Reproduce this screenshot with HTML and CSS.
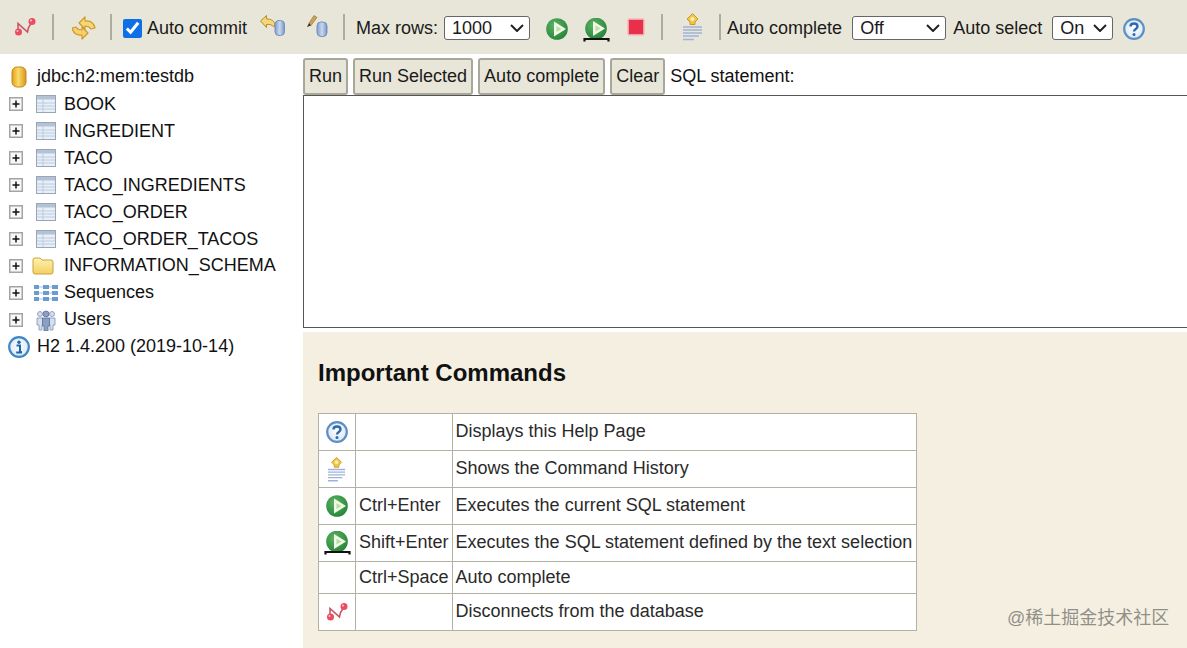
FILE: index.html
```html
<!DOCTYPE html>
<html lang="en">
<head>
<meta charset="utf-8">
<title>H2 Console</title>
<link rel="stylesheet" href="styles.css">
</head>
<body>
<svg class="defs" aria-hidden="true">
  <defs>
    <radialGradient id="gGreen" cx="40%" cy="35%" r="75%"><stop offset="0" stop-color="#5fb565"/><stop offset="1" stop-color="#1f7f35"/></radialGradient>
    <radialGradient id="gHelp" cx="50%" cy="45%" r="60%"><stop offset="0" stop-color="#ffffff"/><stop offset="1" stop-color="#d6e4f4"/></radialGradient>
    <linearGradient id="gGold" x1="0" x2="1" y1="0" y2="0"><stop offset="0" stop-color="#e0a01c"/><stop offset=".45" stop-color="#fbdb6a"/><stop offset="1" stop-color="#d8961a"/></linearGradient>
    <linearGradient id="gBlueCyl" x1="0" x2="1" y1="0" y2="0"><stop offset="0" stop-color="#7f9dcf"/><stop offset=".5" stop-color="#c9d8ef"/><stop offset="1" stop-color="#7793c6"/></linearGradient>
    <linearGradient id="gFolder" x1="0" x2="0" y1="0" y2="1"><stop offset="0" stop-color="#fff3b0"/><stop offset="1" stop-color="#f2cf62"/></linearGradient>
    <symbol id="iDisc" viewBox="0 0 22 20">
      <path d="M4 14V6.500l9.500 8.500 1-4.500 3.500-5.500" fill="none" stroke="#c9505f" stroke-width="1.500"/>
      <circle cx="4.500" cy="15" r="3.500" fill="#ea4d62"/><circle cx="18" cy="4.500" r="3.500" fill="#ea4d62"/>
      <circle cx="17" cy="3.500" r="1" fill="#ffc4cc"/><circle cx="3.500" cy="14" r="1" fill="#ffc4cc"/>
    </symbol>
    <symbol id="iRefresh" viewBox="0 0 24 24">
      <path d="M7 7l6-6v4q8-1 10 7l-4 1q-2-3-6-3v3z" fill="#f6d873" stroke="#cf9a2c" stroke-width="1.200" stroke-linejoin="round"/>
      <path d="M7 7l6-6v4q8-1 10 7l-4 1q-2-3-6-3v3z" transform="rotate(180 11.500 12)" fill="#f6d06a" stroke="#cf9a2c" stroke-width="1.200" stroke-linejoin="round"/>
    </symbol>
    <symbol id="iRollback" viewBox="0 0 26 22">
      <path d="M0.500 6l6-5.500v3.500c4 0 7 1 8.500 5l-1 3c-2-2-4-3-7.500-2.500v3z" fill="#f6d778" stroke="#b48a2c" stroke-width="1"/>
      <rect x="15" y="5.500" width="9.500" height="15" rx="4" fill="url(#gBlueCyl)" stroke="#7490bf"/>
    </symbol>
    <symbol id="iCommit" viewBox="0 0 22 22">
      <path d="M3 8L8 .5l3 2-6 8z" fill="#c9a25a" stroke="#a4854a" stroke-width=".8"/>
      <path d="M3 8l2 2.500-4 1.500z" fill="#3a3020"/>
      <rect x="11" y="7" width="10" height="14.500" rx="4" fill="url(#gBlueCyl)" stroke="#7490bf"/>
    </symbol>
    <symbol id="iRun" viewBox="0 0 22 22">
      <circle cx="11" cy="11" r="10.800" fill="url(#gGreen)"/>
      <path d="M8 3.500L20 11 8 18.500z" fill="#f2f8e6"/>
      <path d="M10.500 8l5 3-5 3z" fill="#bcdca8"/>
    </symbol>
    <symbol id="iRunSel" viewBox="0 0 27 24">
      <circle cx="13" cy="10.500" r="10.800" fill="url(#gGreen)"/>
      <path d="M10 3L22 10.500 10 18z" fill="#f2f8e6"/>
      <path d="M12.500 7.500l5 3-5 3z" fill="#bcdca8"/>
      <path d="M1.500 23.500v-2.500h24v2.500" fill="none" stroke="#111" stroke-width="2.200"/>
    </symbol>
    <symbol id="iStop" viewBox="0 0 18 18">
      <rect x=".5" y=".5" width="17" height="17" rx="2" fill="#f5a0a6"/>
      <rect x="2" y="2" width="14" height="14" fill="#e9304a"/>
    </symbol>
    <symbol id="iHist" viewBox="0 0 20 28">
      <path d="M9.500 .5L15 6l-3 3v2.500H7V9L4 6z" fill="#f6c53f" stroke="#c99a34"/>
      <circle cx="9.500" cy="6" r="2" fill="#fdf0c0"/>
      <g stroke="#9fb3d8" stroke-width="1.400"><path d="M0 14h19M0 17h19M0 20h19M0 23h16M0 26.500h11"/></g>
    </symbol>
    <symbol id="iHelp" viewBox="0 0 22 22">
      <circle cx="11" cy="11" r="9.800" fill="url(#gHelp)" stroke="#5d8fc4" stroke-width="2.200"/>
      <path d="M7.500 8.500c0-2 1.500-3 3.500-3s3.500 1 3.500 3c0 2.500-3.500 2.500-3.500 5" fill="none" stroke="#2f68ad" stroke-width="2.400"/>
      <circle cx="11" cy="16.500" r="1.500" fill="#2f68ad"/>
    </symbol>
    <symbol id="iInfo" viewBox="0 0 22 22">
      <circle cx="11" cy="11" r="9.800" fill="url(#gHelp)" stroke="#3f86c6" stroke-width="2.200"/>
      <circle cx="11" cy="6.300" r="1.700" fill="#1f66aa"/><path d="M8.500 9.500H12V16h1.800M8.200 16.500H14" fill="none" stroke="#1f66aa" stroke-width="2"/>
    </symbol>
    <symbol id="iDb" viewBox="0 0 16 22">
      <rect x="1" y="1" width="14" height="20" rx="5" fill="url(#gGold)" stroke="#c28a18"/>
    </symbol>
    <symbol id="iPlus" viewBox="0 0 14 14">
      <rect x=".75" y=".75" width="12.500" height="12.500" fill="#f8f8f8" stroke="#a4a4a4" stroke-width="1.500"/>
      <path d="M3.500 7h7M7 3.500v7" stroke="#111" stroke-width="1.500"/>
    </symbol>
    <symbol id="iTable" viewBox="0 0 20 18">
      <rect x=".5" y=".5" width="19" height="17" fill="#e9eff7" stroke="#98a6ba"/>
      <rect x="1" y="1" width="18" height="3.500" fill="#b4c2d6"/>
      <path d="M1 8h18M1 11h18M1 14h18M7 4v13" stroke="#bccbe0"/>
    </symbol>
    <symbol id="iFolder" viewBox="0 0 22 19">
      <path d="M1 4q0-2 2-2h5l2 2h9q2 0 2 2v10q0 2-2 2H3q-2 0-2-2z" fill="url(#gFolder)" stroke="#c8a23c"/>
    </symbol>
    <symbol id="iSeq" viewBox="0 0 24 18">
      <path d="M1 3h22M1 9h22M1 15h22" stroke="#a9c4e0" stroke-width="1.200"/>
      <g fill="#6c9bcf"><rect x="0" y="1" width="5" height="4"/><rect x="9" y="1" width="6" height="4"/><rect x="18" y="1" width="6" height="4"/><rect x="0" y="7" width="5" height="4"/><rect x="9" y="7" width="6" height="4"/><rect x="18" y="7" width="6" height="4"/><rect x="0" y="13" width="5" height="4"/><rect x="9" y="13" width="6" height="4"/><rect x="18" y="13" width="6" height="4"/></g>
    </symbol>
    <symbol id="iUsers" viewBox="0 0 20 22">
      <g fill="#d4e0f0" stroke="#7b93b8" stroke-width=".8"><circle cx="4" cy="5" r="2.500"/><circle cx="16" cy="5" r="2.500"/><path d="M1 9h6v7H6v5H3v-5H1zM13 9h6v7h-2v5h-3v-5h-1z"/></g>
      <g fill="#8ba0c0" stroke="#5a7096" stroke-width=".8"><circle cx="10" cy="5" r="3"/><path d="M6.500 9h7v8H12v5H8v-5H6.500z"/></g>
    </symbol>
  </defs>
</svg>

<header class="toolbar">
  <svg class="icon i-disc"><use href="#iDisc"/></svg>
  <span class="sep sep-a"></span>
  <svg class="icon i-refresh"><use href="#iRefresh"/></svg>
  <span class="sep sep-b"></span>
  <input class="autocommit" type="checkbox" checked>
  <span class="lbl lbl-commit">Auto commit</span>
  <svg class="icon i-rollback"><use href="#iRollback"/></svg>
  <svg class="icon i-commit"><use href="#iCommit"/></svg>
  <span class="sep sep-c"></span>
  <span class="lbl lbl-max">Max rows:</span>
  <select class="sel sel-rows"><option>1000</option></select>
  <svg class="icon i-run"><use href="#iRun"/></svg>
  <svg class="icon i-runsel"><use href="#iRunSel"/></svg>
  <svg class="icon i-stop"><use href="#iStop"/></svg>
  <span class="sep sep-d"></span>
  <svg class="icon i-hist"><use href="#iHist"/></svg>
  <span class="sep sep-e"></span>
  <span class="lbl lbl-ac">Auto complete</span>
  <select class="sel sel-ac"><option>Off</option></select>
  <span class="lbl lbl-as">Auto select</span>
  <select class="sel sel-as"><option>On</option></select>
  <svg class="icon i-help"><use href="#iHelp"/></svg>
</header>

<div class="main">
  <nav class="tree">
    <div class="row row-root row-first"><svg class="icon t-db"><use href="#iDb"/></svg><span>jdbc:h2:mem:testdb</span></div>
    <div class="row row-tb"><svg class="icon t-plus"><use href="#iPlus"/></svg><svg class="icon t-table"><use href="#iTable"/></svg><span>BOOK</span></div>
    <div class="row row-tb"><svg class="icon t-plus"><use href="#iPlus"/></svg><svg class="icon t-table"><use href="#iTable"/></svg><span>INGREDIENT</span></div>
    <div class="row row-tb"><svg class="icon t-plus"><use href="#iPlus"/></svg><svg class="icon t-table"><use href="#iTable"/></svg><span>TACO</span></div>
    <div class="row row-tb"><svg class="icon t-plus"><use href="#iPlus"/></svg><svg class="icon t-table"><use href="#iTable"/></svg><span>TACO_INGREDIENTS</span></div>
    <div class="row row-tb"><svg class="icon t-plus"><use href="#iPlus"/></svg><svg class="icon t-table"><use href="#iTable"/></svg><span>TACO_ORDER</span></div>
    <div class="row row-tb"><svg class="icon t-plus"><use href="#iPlus"/></svg><svg class="icon t-table"><use href="#iTable"/></svg><span>TACO_ORDER_TACOS</span></div>
    <div class="row row-folder"><svg class="icon t-plus"><use href="#iPlus"/></svg><svg class="icon t-folder"><use href="#iFolder"/></svg><span>INFORMATION_SCHEMA</span></div>
    <div class="row"><svg class="icon t-plus"><use href="#iPlus"/></svg><svg class="icon t-seq"><use href="#iSeq"/></svg><span>Sequences</span></div>
    <div class="row"><svg class="icon t-plus"><use href="#iPlus"/></svg><svg class="icon t-users"><use href="#iUsers"/></svg><span>Users</span></div>
    <div class="row row-root"><svg class="icon t-info"><use href="#iInfo"/></svg><span>H2 1.4.200 (2019-10-14)</span></div>
  </nav>

  <section class="work">
    <div class="cmdbar">
      <button class="btn" type="button">Run</button>
      <button class="btn" type="button">Run Selected</button>
      <button class="btn" type="button">Auto complete</button>
      <button class="btn" type="button">Clear</button>
      <span class="cmdlabel">SQL statement:</span>
    </div>
    <textarea class="sql"></textarea>
    <div class="help">
      <h3 class="help-title">Important Commands</h3>
      <table class="cmds">
        <tr class="tall"><td class="c-ico"><svg class="icon m-help"><use href="#iHelp"/></svg></td><td></td><td class="c-desc">Displays this Help Page</td></tr>
        <tr class="tall"><td class="c-ico"><svg class="icon m-hist"><use href="#iHist"/></svg></td><td></td><td class="c-desc">Shows the Command History</td></tr>
        <tr class="tall"><td class="c-ico"><svg class="icon m-run"><use href="#iRun"/></svg></td><td>Ctrl+Enter</td><td class="c-desc">Executes the current SQL statement</td></tr>
        <tr class="tall"><td class="c-ico"><svg class="icon m-runsel"><use href="#iRunSel"/></svg></td><td>Shift+Enter</td><td class="c-desc">Executes the SQL statement defined by the text selection</td></tr>
        <tr class="short"><td class="c-ico"></td><td>Ctrl+Space</td><td class="c-desc">Auto complete</td></tr>
        <tr class="tall"><td class="c-ico"><svg class="icon m-disc"><use href="#iDisc"/></svg></td><td></td><td class="c-desc">Disconnects from the database</td></tr>
      </table>
    </div>
  </section>
</div>
<div class="watermark">@稀土掘金技术社区</div>
</body>
</html>
```
FILE: styles.css
```css
* { box-sizing: border-box; }
html, body { margin: 0; height: 648px; overflow: hidden; }
body { font-family: "Liberation Sans", Arial, sans-serif; font-size: 18px; color: #111; background: #fff; position: relative; }
.defs { width: 0; height: 0; position: absolute; }
.icon { display: block; flex: none; overflow: visible; }

.toolbar { height: 54px; background: #e8e6d8; display: flex; align-items: center; white-space: nowrap; }
.sep { flex: none; width: 2px; height: 26px; background: #aeaca0; }
.lbl { flex: none; color: #1a1a1a; margin-top: 2px; }
.i-disc { width: 22px; height: 20px; margin-left: 14px; }
.sep-a { margin-left: 16px; }
.i-refresh { width: 24px; height: 24px; margin: 1px 0 0 18px; }
.sep-b { margin-left: 14px; }
.autocommit { width: 19px; height: 19px; margin: 3px 0 0 11px; accent-color: #0f6fe8; flex: none; }
.lbl-commit { margin-left: 5px; }
.i-rollback { width: 26px; height: 22px; margin: -2px 0 0 13px; }
.i-commit { width: 22px; height: 22px; margin: -2px 0 0 20px; }
.sep-c { margin-left: 15px; }
.lbl-max { margin-left: 11px; }
.sel { flex: none; height: 24px; font: 18px "Liberation Sans", Arial, sans-serif; color: #1a1a1a; border: 1px solid #666; border-radius: 3px; padding: 0 0 0 7px; margin-top: 2px; appearance: none; background: #fff url("data:image/svg+xml,%3Csvg xmlns='http://www.w3.org/2000/svg' width='14' height='8'%3E%3Cpath d='M1 1l6 6 6-6' fill='none' stroke='%23222' stroke-width='2'/%3E%3C/svg%3E") no-repeat right 5px center; }
.sel-rows { width: 86px; margin-left: 6px; }
.i-run { width: 22px; height: 22px; margin: 3px 0 0 16px; }
.i-runsel { width: 27px; height: 24px; margin: 6px 0 0 15px; }
.i-stop { width: 18px; height: 18px; margin: -1px 0 0 17px; }
.sep-d { margin-left: 16px; }
.i-hist { width: 20px; height: 28px; margin: 0 0 0 20px; }
.sep-e { margin-left: 16px; }
.lbl-ac { margin-left: 6px; }
.sel-ac { width: 94px; margin-left: 10px; }
.lbl-as { margin-left: 7px; }
.sel-as { width: 61px; margin-left: 10px; }
.i-help { width: 22px; height: 22px; margin: 3px 0 0 10px; }

.main { display: flex; height: 594px; }
.tree { flex: none; width: 303px; padding-top: 9px; }
.row { height: 27px; display: flex; align-items: center; padding-left: 9px; white-space: nowrap; }
.row-root { padding-left: 0; }
.row-first { margin-bottom: 1px; }
.row-folder { margin-top: -1px; }
.t-db { width: 16px; height: 22px; margin: 0 10px 0 11px; }
.t-info { width: 22px; height: 22px; margin: 0 7px 0 8px; }
.t-plus { width: 14px; height: 14px; }
.t-table { width: 20px; height: 18px; margin: 0 8px 0 13px; }
.t-folder { width: 22px; height: 19px; margin: 0 10px 0 9px; }
.t-seq { width: 24px; height: 18px; margin: 0 6px 0 11px; }
.t-users { width: 20px; height: 22px; margin: 0 8px 0 13px; }
.row-tb .icon { margin-top: -2px; }

.work { flex: 1; min-width: 0; display: flex; flex-direction: column; overflow: hidden; }
.cmdbar { height: 41px; padding-top: 4px; display: flex; align-items: flex-start; }
.btn { height: 37px; font: 18px "Liberation Sans", Arial, sans-serif; color: #1a1a1a; background: #e8e6d8; border: 2px solid #a9a79a; border-radius: 3px; padding: 0 4px; margin-right: 5px; flex: none; }
.cmdlabel { line-height: 36px; }
.sql { display: block; flex: none; width: 100%; height: 233px; border: 1px solid #555; border-right: 0; background: #fff; resize: none; padding: 0; margin: 0; outline: 0; }
.help { flex: 1; margin-top: 4px; background: #f4efe1; padding: 27px 0 0 15px; }
.help-title { margin: 0 0 26px; font-size: 24px; line-height: 28px; font-weight: 700; color: #111; }
.cmds { border-collapse: collapse; background: #fff; color: #2a2a2a; }
.cmds td { border: 1px solid #b3b1a4; padding: 0 3px; height: 37px; white-space: nowrap; }
.cmds .tall td { padding-bottom: 2px; }
.cmds .short td { height: 32px; }
.cmds td.c-desc { padding-right: 4px; }
.c-ico { width: 37px; }
.cmds td.c-ico, .cmds .tall td.c-ico { padding: 0; }
.c-ico .icon { margin: 0 auto; }
.m-help, .m-run { width: 22px; height: 22px; }
.m-hist { width: 18px; height: 29px; }
.m-runsel { width: 27px; height: 24px; }
.m-disc { width: 22px; height: 20px; }

.watermark { position: absolute; left: 1007px; top: 608px; font-size: 18px; line-height: 21px; color: rgba(110, 110, 105, .75); font-family: "Liberation Sans", "Noto Sans CJK SC", sans-serif; white-space: nowrap; }
```
